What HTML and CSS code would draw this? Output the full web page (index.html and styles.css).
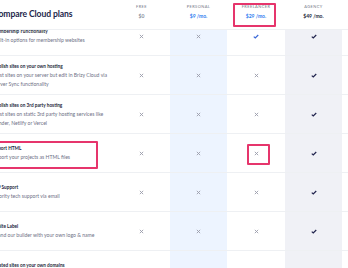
FILE: index.html
```html
<!DOCTYPE html>
<html lang="en">
<head>
    <meta charset="UTF-8">
    <meta name="viewport" content="width=device-width, initial-scale=1.0">
    <title>Compare Cloud plans</title>
    <link rel="stylesheet" href="styles.css">
</head>
<body>
    <div class="compare">
        <div class="head">
            <h2 class="head-title">Compare Cloud plans</h2>
            <div class="plan">
                <span class="plan-name">Free</span>
                <span class="plan-price">$0</span>
            </div>
            <div class="plan">
                <span class="plan-name">Personal</span>
                <span class="plan-price blue">$9 /mo.</span>
            </div>
            <div class="plan marked">
                <span class="plan-name">Freelancer</span>
                <span class="plan-price blue">$29 /mo.</span>
                <span class="mark mark-plan"></span>
            </div>
            <div class="plan">
                <span class="plan-name">Agency</span>
                <span class="plan-price dark">$49 /mo.</span>
            </div>
        </div>

        <div class="rows">
            <div class="row">
                <div class="feature">
                    <div class="feature-name">Membership Functionality</div>
                    <div class="feature-desc">Built-in options for membership websites</div>
                </div>
                <div class="cell"><svg class="no" viewBox="0 0 6 6"><path d="M1 1 5 5M5 1 1 5"/></svg></div>
                <div class="cell personal"><svg class="no" viewBox="0 0 6 6"><path d="M1 1 5 5M5 1 1 5"/></svg></div>
                <div class="cell"><svg class="yes blue" viewBox="0 0 8 6"><path d="M1 3.2 3 5 7 1"/></svg></div>
                <div class="cell agency"><svg class="yes" viewBox="0 0 8 6"><path d="M1 3.2 3 5 7 1"/></svg></div>
            </div>
            <div class="row">
                <div class="feature">
                    <div class="feature-name">Publish sites on your own hosting</div>
                    <div class="feature-desc">Host sites on your server but edit in Brizy Cloud via<br>Server Sync functionality</div>
                </div>
                <div class="cell"><svg class="no" viewBox="0 0 6 6"><path d="M1 1 5 5M5 1 1 5"/></svg></div>
                <div class="cell personal"><svg class="no" viewBox="0 0 6 6"><path d="M1 1 5 5M5 1 1 5"/></svg></div>
                <div class="cell"><svg class="no" viewBox="0 0 6 6"><path d="M1 1 5 5M5 1 1 5"/></svg></div>
                <div class="cell agency"><svg class="yes" viewBox="0 0 8 6"><path d="M1 3.2 3 5 7 1"/></svg></div>
            </div>
            <div class="row">
                <div class="feature">
                    <div class="feature-name">Publish sites on 3rd party hosting</div>
                    <div class="feature-desc">Host sites on static 3rd party hosting services like<br>Render, Netlify or Vercel</div>
                </div>
                <div class="cell"><svg class="no" viewBox="0 0 6 6"><path d="M1 1 5 5M5 1 1 5"/></svg></div>
                <div class="cell personal"><svg class="no" viewBox="0 0 6 6"><path d="M1 1 5 5M5 1 1 5"/></svg></div>
                <div class="cell"><svg class="no" viewBox="0 0 6 6"><path d="M1 1 5 5M5 1 1 5"/></svg></div>
                <div class="cell agency"><svg class="yes" viewBox="0 0 8 6"><path d="M1 3.2 3 5 7 1"/></svg></div>
            </div>
            <div class="row">
                <div class="feature">
                    <div class="feature-name">Export HTML</div>
                    <div class="feature-desc">Export your projects as HTML files</div>
                    <span class="mark mark-feature"></span>
                </div>
                <div class="cell"><svg class="no" viewBox="0 0 6 6"><path d="M1 1 5 5M5 1 1 5"/></svg></div>
                <div class="cell personal"><svg class="no" viewBox="0 0 6 6"><path d="M1 1 5 5M5 1 1 5"/></svg></div>
                <div class="cell">
                    <svg class="no" viewBox="0 0 6 6"><path d="M1 1 5 5M5 1 1 5"/></svg>
                    <span class="mark mark-cell"></span>
                </div>
                <div class="cell agency"><svg class="yes" viewBox="0 0 8 6"><path d="M1 3.2 3 5 7 1"/></svg></div>
            </div>
            <div class="row">
                <div class="feature">
                    <div class="feature-name">VIP Support</div>
                    <div class="feature-desc">Priority tech support via email</div>
                </div>
                <div class="cell"><svg class="no" viewBox="0 0 6 6"><path d="M1 1 5 5M5 1 1 5"/></svg></div>
                <div class="cell personal"><svg class="no" viewBox="0 0 6 6"><path d="M1 1 5 5M5 1 1 5"/></svg></div>
                <div class="cell"><svg class="no" viewBox="0 0 6 6"><path d="M1 1 5 5M5 1 1 5"/></svg></div>
                <div class="cell agency"><svg class="yes" viewBox="0 0 8 6"><path d="M1 3.2 3 5 7 1"/></svg></div>
            </div>
            <div class="row">
                <div class="feature">
                    <div class="feature-name">White Label</div>
                    <div class="feature-desc">Brand our builder with your own logo &amp; name</div>
                </div>
                <div class="cell"><svg class="no" viewBox="0 0 6 6"><path d="M1 1 5 5M5 1 1 5"/></svg></div>
                <div class="cell personal"><svg class="no" viewBox="0 0 6 6"><path d="M1 1 5 5M5 1 1 5"/></svg></div>
                <div class="cell"><svg class="no" viewBox="0 0 6 6"><path d="M1 1 5 5M5 1 1 5"/></svg></div>
                <div class="cell agency"><svg class="yes" viewBox="0 0 8 6"><path d="M1 3.2 3 5 7 1"/></svg></div>
            </div>
            <div class="row">
                <div class="feature">
                    <div class="feature-name">Hosted sites on your own domains</div>
                    <div class="feature-desc">Connect your own domains to hosted sites</div>
                </div>
                <div class="cell"><svg class="no" viewBox="0 0 6 6"><path d="M1 1 5 5M5 1 1 5"/></svg></div>
                <div class="cell personal"><svg class="no" viewBox="0 0 6 6"><path d="M1 1 5 5M5 1 1 5"/></svg></div>
                <div class="cell"><svg class="no" viewBox="0 0 6 6"><path d="M1 1 5 5M5 1 1 5"/></svg></div>
                <div class="cell agency"><svg class="yes" viewBox="0 0 8 6"><path d="M1 3.2 3 5 7 1"/></svg></div>
            </div>
        </div>
    </div>
</body>
</html>
```

FILE: styles.css
```css
:root {
    --text-dark: #1c1f3a;
    --text-muted: #6e7186;
    --line: #eef0f3;
    --personal-bg: #edf4ff;
    --agency-bg: #f0f1f6;
    --blue: #2f7cf0;
    --mark: #e6356c;
}

body {
    margin: 0;
    background: #fff;
    font-family: Lato, 'Noto Sans', sans-serif;
    color: var(--text-dark);
    overflow: hidden;
}

.compare {
    margin-left: -7px;
}

/* header and rows share the same columns */
.head,
.row {
    display: grid;
    grid-template-columns: 120px 57px 57px 58px 57px 1fr;
}

.head {
    position: relative;
    z-index: 1;
    height: 29px;
    border-bottom: 1px solid var(--line);
}

.head-title {
    margin: 0 0 2px;
    align-self: center;
    font-size: 8.6px;
    font-weight: 700;
    letter-spacing: -0.1px;
    color: #22264a;
}

.plan {
    position: relative;
    display: flex;
    flex-direction: column;
    align-items: center;
    padding-top: 4px;
    gap: 3px;
    background: #fff;
}

.plan-name {
    font-size: 4px;
    line-height: 6px;
    letter-spacing: 0.4px;
    text-transform: uppercase;
    color: #767989;
}

.plan-price {
    font-size: 5px;
    line-height: 7px;
    font-weight: 700;
    color: #8d90a0;
}

.plan-price.blue {
    color: var(--blue);
}

.plan-price.dark {
    color: var(--text-dark);
}

.rows {
    margin-top: -13px;
}

.row {
    min-height: 38px;
    border-bottom: 1px solid var(--line);
}

.feature {
    position: relative;
    display: flex;
    flex-direction: column;
    justify-content: center;
}

.feature-name {
    font-size: 4.7px;
    line-height: 9px;
    font-weight: 700;
    color: var(--text-dark);
}

.feature-desc {
    font-size: 5.1px;
    line-height: 9px;
    color: var(--text-muted);
}

.cell {
    position: relative;
    display: flex;
    align-items: center;
    justify-content: center;
}

.cell.personal {
    background: var(--personal-bg);
}

.cell.agency {
    background: var(--agency-bg);
}

.no {
    width: 5px;
    height: 5px;
    fill: none;
    stroke: #9a9cab;
    stroke-width: 1.1;
}

.yes {
    width: 6px;
    height: 5px;
    fill: none;
    stroke: #20234d;
    stroke-width: 1.6;
}

.yes.blue {
    stroke: #3a68d8;
}

/* red highlight boxes drawn over the table */
.mark {
    position: absolute;
    box-sizing: border-box;
    border: 2px solid var(--mark);
    border-radius: 1px;
}

.mark-plan {
    left: 6px;
    top: 3px;
    width: 43px;
    height: 24px;
}

.mark-feature {
    left: -4px;
    right: 15px;
    top: 7px;
    height: 28px;
}

.mark-cell {
    left: 20px;
    top: 10px;
    width: 23px;
    height: 21px;
}
```
